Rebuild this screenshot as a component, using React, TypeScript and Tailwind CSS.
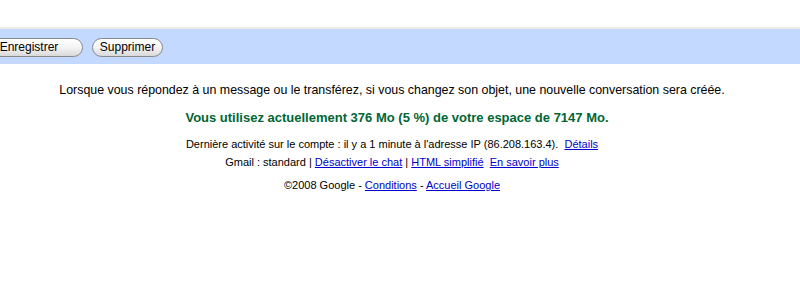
import React from 'react';

const PillButton: React.FC<{ label: string; className?: string }> = ({ label, className = '' }) => (
    <button
        className={`h-[19px] rounded-full border border-[#8a8a8a] bg-gradient-to-b from-white via-[#f4f4f4] to-[#d9d9d9] text-[12px] leading-none text-black shadow-[inset_0_1px_0_#fff] ${className}`}
    >
        {label}
    </button>
);

const Link: React.FC<{ children: React.ReactNode }> = ({ children }) => (
    <a href="#" className="text-[#0000cc] underline">
        {children}
    </a>
);

const App: React.FC = () => {
    return (
        <div className="w-[800px] h-[281px] overflow-hidden bg-white font-['Liberation_Sans',Arial,sans-serif] text-black">
            <div className="h-[27px]" />
            <div className="h-[2px] bg-[#ebebeb]" />
            <div className="h-[35px] bg-[#c3d9ff] flex items-center gap-[9px] pt-[1px]">
                <PillButton label="Enregistrer" className="ml-[-30px] w-[113px] pl-[5px]" />
                <PillButton label="Supprimer" className="w-[71px]" />
            </div>

            <div className="flex flex-col items-center text-center pr-[16px]">
                <p className="mt-[18px] text-[12.4px] leading-[16px]">
                    Lorsque vous répondez à un message ou le transférez, si vous changez son objet, une nouvelle conversation sera créée.
                </p>
                <p className="mt-[12px] ml-[10px] text-[13px] leading-[16px] font-bold text-[#006633]">
                    Vous utilisez actuellement 376 Mo (5 %) de votre espace de 7147 Mo.
                </p>
                <p className="mt-[11px] text-[11px] leading-[14px]">
                    Dernière activité sur le compte : il y a 1 minute à l'adresse IP (86.208.163.4).&nbsp; <Link>Détails</Link>
                </p>
                <p className="mt-[4px] text-[11px] leading-[14px]">
                    Gmail : standard | <Link>Désactiver le chat</Link> | <Link>HTML simplifié</Link>&nbsp; <Link>En savoir plus</Link>
                </p>
                <p className="mt-[9px] text-[11px] leading-[14px]">
                    ©2008 Google - <Link>Conditions</Link> - <Link>Accueil Google</Link>
                </p>
            </div>
        </div>
    );
};

export default App;
